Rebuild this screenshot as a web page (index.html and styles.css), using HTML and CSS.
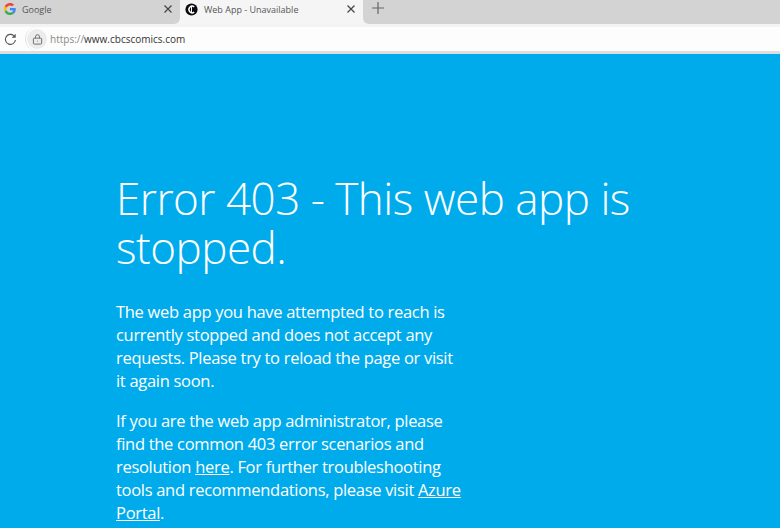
FILE: index.html
```html
<!DOCTYPE html>
<html lang="en">
<head>
<meta charset="utf-8">
<title>Web App - Unavailable</title>
<link rel="stylesheet" href="styles.css">
</head>
<body>
<div class="chrome">
  <div class="tabstrip">
    <div class="tab tab-inactive">
      <svg class="favicon favicon-small" viewBox="0 0 48 48"><path fill="#EA4335" d="M24 9.500c3.500 0 6.700 1.200 9.200 3.600l6.900-6.900C35.900 2.400 30.500 0 24 0 14.600 0 6.500 5.400 2.600 13.200l8 6.200C12.400 13.700 17.700 9.500 24 9.500z"/><path fill="#4285F4" d="M47 24.500c0-1.600-.2-3.100-.4-4.500H24v9h12.900c-.6 3-2.200 5.500-4.700 7.200l7.700 6C44.400 37.900 47 31.800 47 24.500z"/><path fill="#FBBC05" d="M10.600 28.600a14.500 14.500 0 0 1 0-9.200l-8-6.200a24 24 0 0 0 0 21.600l8-6.200z"/><path fill="#34A853" d="M24 48c6.500 0 11.900-2.100 15.900-5.800l-7.700-6c-2.100 1.400-4.900 2.300-8.200 2.300-6.300 0-11.600-4.200-13.400-9.900l-8 6.200C6.500 42.600 14.600 48 24 48z"/></svg>
      <span class="tab-title">Google</span>
      <svg class="tab-close" viewBox="0 0 10 10"><path d="M1.500 1.500l7 7M8.500 1.500l-7 7"/></svg>
    </div>
    <div class="tab tab-active">
      <svg class="favicon" viewBox="0 0 16 16"><circle cx="8" cy="8" r="7.500" fill="#0c0c0c"/><path d="M11.300 4.800A4 4 0 1 0 11.300 11.200" fill="none" stroke="#fff" stroke-width="1.800"/><path d="M8 3.500v9" stroke="#fff" stroke-width="1.200"/></svg>
      <span class="tab-title">Web App - Unavailable</span>
      <svg class="tab-close" viewBox="0 0 10 10"><path d="M1.500 1.500l7 7M8.500 1.500l-7 7"/></svg>
    </div>
    <div class="tab-filler">
      <svg class="new-tab" viewBox="0 0 14 14"><path d="M7 1v12M1 7h12"/></svg>
    </div>
  </div>
  <div class="toolbar">
    <svg class="reload" viewBox="0 0 14 14"><path d="M12.300 7.500A5.400 5.400 0 1 1 10.600 2.900"/><path class="reload-head" d="M12.600 .8v4.400H8.200z"/></svg>
    <div class="address">
      <span class="lock"><svg viewBox="0 0 12 12"><rect x="1.500" y="4.500" width="9" height="6.500" rx="1"/><path d="M3.800 4.500V3a2.200 2.200 0 0 1 4.400 0v1.500"/><path d="M6 7.300v.8"/></svg></span>
      <span class="url"><span class="scheme">https://</span>www.cbcscomics.com</span>
    </div>
  </div>
</div>
<main class="page">
  <h1 class="headline">Error 403 - This web app is stopped.</h1>
  <p class="para">The web app you have attempted to reach is currently stopped and does not accept any requests. Please try to reload the page or visit it again soon.</p>
  <p class="para">If you are the web app administrator, please find the common 403 error scenarios and resolution <a href="#">here</a>. For further troubleshooting tools and recommendations, please visit <a href="#">Azure Portal</a>.</p>
</main>
</body>
</html>
```
FILE: styles.css
```css
html, body {
  margin: 0;
  height: 100%;
  overflow: hidden;
}
body {
  background: #00abec;
  font-family: "Open Sans", "Liberation Sans", sans-serif;
}
.chrome {
  height: 54px;
  background: #f5f5f5;
}
.tabstrip {
  height: 24px;
  display: flex;
  align-items: stretch;
}
.tab {
  display: flex;
  align-items: center;
  box-sizing: border-box;
  color: #555;
}
.tab-inactive {
  width: 180px;
  padding: 0 7px 6px 4px;
  background: #d3d3d3;
  border-bottom-right-radius: 6px;
}
.tab-active {
  width: 183px;
  padding: 0 7px 6px 5px;
}
.tab-filler {
  flex: 1;
  display: flex;
  align-items: flex-start;
  background: #d3d3d3;
  border-bottom-left-radius: 6px;
}
.favicon {
  width: 13px;
  height: 13px;
  margin-right: 6px;
  flex: none;
}
.favicon-small {
  width: 12px;
  height: 12px;
}
.tab-title {
  flex: 1;
  white-space: nowrap;
  font-size: 9px;
}
.tab-close {
  width: 10px;
  height: 10px;
  fill: none;
  stroke: #444;
  stroke-width: 1.200;
  flex: none;
}
.new-tab {
  width: 14px;
  height: 14px;
  margin: 1px 0 0 8px;
  fill: none;
  stroke: #666;
  stroke-width: 1.200;
}
.toolbar {
  height: 30px;
  box-sizing: border-box;
  background: #fdfdfd;
  border-top: 3px solid #f3f3f3;
  border-bottom: 3px solid #dedede;
  display: flex;
  align-items: center;
  padding-left: 4px;
}
.reload {
  width: 13px;
  height: 13px;
  fill: none;
  stroke: #555;
  stroke-width: 1.200;
  flex: none;
}
.reload-head {
  fill: #555;
  stroke: none;
}
.address {
  display: flex;
  flex: 1;
  align-items: center;
  height: 24px;
  margin-left: 8px;
  border-left: 1px solid #e3e3e3;
  border-radius: 12px 0 0 12px;
  padding-left: 1px;
  font-size: 10px;
}
.lock {
  width: 20px;
  height: 20px;
  border-radius: 50%;
  background: #ececec;
  display: flex;
  align-items: center;
  justify-content: center;
  margin-right: 3px;
}
.lock svg {
  width: 11px;
  height: 11px;
  fill: none;
  stroke: #666;
  stroke-width: 1;
}
.url {
  color: #333;
  white-space: nowrap;
  font-size: 10px;
}
.scheme {
  color: #888;
}
.page {
  padding: 120px 0 0 116px;
  color: #fff;
}
.headline {
  margin: 0 0 28px;
  width: 540px;
  font-weight: 300;
  font-size: 44px;
  line-height: 49px;
  letter-spacing: -0.5px;
}
.para {
  margin: 0 0 17px;
  width: 346px;
  font-size: 16.500px;
  line-height: 23px;
  letter-spacing: -0.3px;
}
.para a {
  color: #fff;
}
```
